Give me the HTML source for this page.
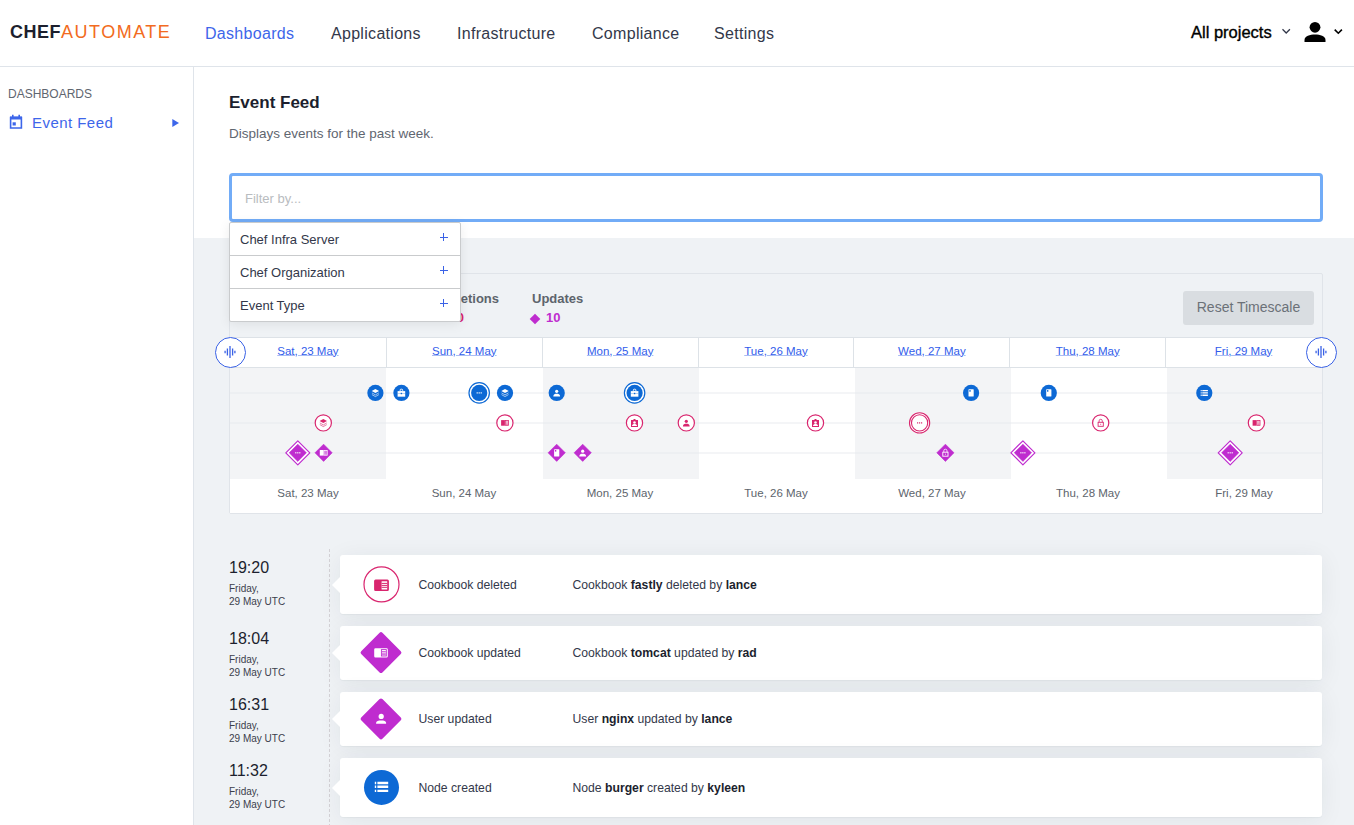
<!DOCTYPE html>
<html><head><meta charset="utf-8">
<style>
*{box-sizing:border-box;margin:0;padding:0}
html,body{width:1354px;height:825px;overflow:hidden;background:#fff;font-family:"Liberation Sans",sans-serif;color:#1c1f2e}
.a{position:absolute;white-space:nowrap}
#hdr{position:absolute;left:0;top:0;width:1354px;height:67px;background:#fff;border-bottom:1px solid #dfe4ea}
.logo{position:absolute;left:10px;top:22px;font-size:18px;line-height:20px;white-space:nowrap}
.logo b{color:#1c1f2e;font-weight:bold;letter-spacing:0.5px}
.logo span{color:#f26b21;letter-spacing:1.5px}
.nav{position:absolute;top:24.5px;font-size:16px;line-height:18px;color:#33384a;white-space:nowrap;letter-spacing:0.3px}
#side{position:absolute;left:0;top:67px;width:194px;height:758px;background:#fff;border-right:1px solid #dfe4ea}
#gray{position:absolute;left:194px;top:238px;width:1160px;height:587px;background:#eff2f5}
#filter{position:absolute;left:229px;top:173px;width:1094px;height:49px;border:3px solid #72acf7;border-radius:4px;background:#fff}
#dd{position:absolute;left:229px;top:222px;width:232px;height:100px;background:#fff;border:1px solid #c9cbcd;border-radius:2px;box-shadow:0 2px 12px rgba(0,0,0,0.08)}
.ddr{position:absolute;left:0;width:230px;height:33px;border-bottom:1px solid #c9cbcd}
.ddr span{position:absolute;left:10px;top:9px;font-size:13px;line-height:15px;color:#33384a}
.ddr i{position:absolute;left:209.5px;top:10px;width:8px;height:8px}
.ddr i:before{content:"";position:absolute;left:3.5px;top:0;width:1px;height:8px;background:#3a62e6}
.ddr i:after{content:"";position:absolute;left:0;top:3.5px;width:8px;height:1px;background:#3a62e6}
#card{position:absolute;left:229px;top:273px;width:1094px;height:241px;border:1px solid #e0e4e9;border-radius:2px;background:#eff2f5}
.cnt{position:absolute;top:17px;font-size:13px;font-weight:bold;color:#5d646c}
#reset{position:absolute;left:953px;top:17px;width:131px;height:34px;background:#d9dde1;border-radius:3px;font-size:14px;color:#6b7178;line-height:32px;text-align:center}
#dates{position:absolute;left:0;top:63px;width:1092px;height:31px;background:#fff;border-top:1px solid #dde2e7;border-bottom:1px solid #dde2e7}
.dt{position:absolute;top:0;width:155.86px;height:29px;border-left:1px solid #dde2e7;text-align:center}
.dt span{display:inline-block;margin-top:6px;font-size:11.5px;line-height:14px;color:#315ceb;text-decoration:underline;text-decoration-color:#a9bcf4;text-underline-offset:0px}
#plot{position:absolute;left:0;top:94px;width:1092px;height:111px;background:#fff}
.sh{position:absolute;top:0;height:111px;background:#f3f4f6}
.hl{position:absolute;left:0;width:1092px;height:2px;background:#e6e9ee;opacity:.45}
#bot{position:absolute;left:0;top:205px;width:1092px;height:34px;background:#fff}
.bl{position:absolute;top:7px;width:156px;text-align:center;font-size:11.5px;line-height:14px;color:#5d646c}
.hand{position:absolute;top:336.5px;margin-left:0.5px;width:31px;height:31px;border:1.5px solid #3a62e6;border-radius:50%;background:#fff}
.time{position:absolute;left:229px;font-size:16px;line-height:18px;color:#1c1f2e}
.day{position:absolute;left:229px;font-size:10px;line-height:13px;color:#3b404c}
.fc{position:absolute;left:340px;width:982px;background:#fff;border-radius:3px;box-shadow:0 1px 1px rgba(30,40,60,0.04),0 3px 24px rgba(30,40,60,0.065)}
.fc:before{content:"";position:absolute;left:-8px;top:50%;margin-top:-8px;width:0;height:0;border-top:8px solid transparent;border-bottom:8px solid transparent;border-right:8px solid #fff}
.fc .t1{position:absolute;left:78.5px;margin-top:1px;font-size:12.2px;color:#33384a}
.fc .t2{position:absolute;left:232.5px;margin-top:1px;font-size:12.2px;color:#33384a}
.fc .t2 b{color:#1c1f2e}
</style></head><body>
<div id="hdr">
  <div class="logo"><b>CHEF</b><span>AUTOMATE</span></div>
  <div class="nav" style="left:205px;color:#3d66ea">Dashboards</div>
  <div class="nav" style="left:331px">Applications</div>
  <div class="nav" style="left:457px">Infrastructure</div>
  <div class="nav" style="left:592px">Compliance</div>
  <div class="nav" style="left:714px">Settings</div>
  
<svg class="a" style="left:1270px;top:14px" width="84" height="36" viewBox="1270 14 84 36">
<path d="M1282.5,29.3 L1286.2,33 L1289.9,29.3" fill="none" stroke="#33384a" stroke-width="1.3"/>
<circle cx="1315" cy="27.3" r="5.4" fill="#000"/>
<path d="M1304.5,42 V40 C1304.5,36.2 1310,34.6 1315,34.6 C1320,34.6 1325.5,36.2 1325.5,40 V42Z" fill="#000"/>
<path d="M1334.7,29.6 L1338.3,33.2 L1341.9,29.6" fill="none" stroke="#000" stroke-width="1.6"/>
</svg>
  <div class="nav" style="left:1191px;color:#000;letter-spacing:0;font-size:16.5px;top:23px;-webkit-text-stroke:0.35px #000">All projects</div>
</div>
<div id="side"><svg class="a" style="left:0;top:0" width="194" height="80" viewBox="0 67 194 80">
<path d="M10.6,117.5 H21.4 V128 H10.6Z" fill="none" stroke="#3d66ea" stroke-width="1.6"/>
<path d="M10,116.5 H22 V119.5 H10Z" fill="#3d66ea"/>
<path d="M12.8,114.7 V117 M19.2,114.7 V117" stroke="#3d66ea" stroke-width="1.6"/>
<rect x="12.6" y="122.3" width="3.2" height="3.2" fill="#3d66ea"/>
<path d="M172.3,119.1 L179,123.1 L172.3,127.1Z" fill="#3d66ea"/>
</svg>
  <div class="a" style="left:8px;top:20px;font-size:12px;color:#5f6670">DASHBOARDS</div>
  <div class="a" style="left:32px;top:47px;font-size:15px;letter-spacing:0.45px;color:#3d66ea">Event Feed</div>
</div>
<div class="a" style="left:229px;top:93px;font-size:17px;font-weight:bold;color:#1c1f2e">Event Feed</div>
<div class="a" style="left:229px;top:126px;font-size:13.5px;color:#5f6670">Displays events for the past week.</div>
<div id="gray"></div>
<div id="filter"><span class="a" style="left:13px;top:15px;font-size:13px;color:#b9bcc0">Filter by...</span></div>

<div id="card">
  <div class="cnt" style="left:22px">Total Events</div>
  <div class="cnt" style="left:22px;top:36px;color:#1c1f2e">24</div>
  <div class="cnt" style="left:130px">Creations</div>
  <div class="cnt" style="left:130px;top:36px;color:#0d69d5">9</div>
  <div class="cnt" style="left:205px;width:64px;text-align:right">Deletions</div>
  <div class="cnt" style="left:210px;top:36px;width:24px;text-align:right;color:#d9256e">10</div>
  <div class="cnt" style="left:302px">Updates</div>
  <svg class="a" style="left:299px;top:38px" width="12" height="14" viewBox="-6 -7 12 14"><path d="M0,-5.3 L5.3,0 L0,5.3 L-5.3,0Z" fill="#bf2ccf"/></svg>
  <div class="cnt" style="left:316px;top:36px;color:#bf2ccf">10</div>
  <div id="reset">Reset Timescale</div>
  <div id="dates">
    <div class="dt" style="left:0;border-left:0"><span>Sat, 23 May</span></div>
    <div class="dt" style="left:155.86px"><span>Sun, 24 May</span></div>
    <div class="dt" style="left:311.72px"><span>Mon, 25 May</span></div>
    <div class="dt" style="left:467.58px"><span>Tue, 26 May</span></div>
    <div class="dt" style="left:623.44px"><span>Wed, 27 May</span></div>
    <div class="dt" style="left:779.30px"><span>Thu, 28 May</span></div>
    <div class="dt" style="left:935.16px"><span>Fri, 29 May</span></div>
  </div>
  <div id="plot">
    <div class="sh" style="left:0;width:156px"></div>
    <div class="sh" style="left:313px;width:156px"></div>
    <div class="sh" style="left:625px;width:156px"></div>
    <div class="sh" style="left:937px;width:155px"></div>
    <div class="hl" style="top:24px"></div>
    <div class="hl" style="top:54px"></div>
    <div class="hl" style="top:84px"></div>
  </div>
  <div id="bot">
    <div class="bl" style="left:0">Sat, 23 May</div>
    <div class="bl" style="left:156px">Sun, 24 May</div>
    <div class="bl" style="left:312px">Mon, 25 May</div>
    <div class="bl" style="left:468px">Tue, 26 May</div>
    <div class="bl" style="left:624px">Wed, 27 May</div>
    <div class="bl" style="left:780px">Thu, 28 May</div>
    <div class="bl" style="left:936px">Fri, 29 May</div>
  </div>
</div>
<svg class="a" style="left:0;top:0" width="1354" height="825" viewBox="0 0 1354 825"><g transform="translate(375.4,392.9)"><circle r="8.1" fill="#0d69d5"/><path d="M0,-4 L3.7,-1.9 L0,0.2 L-3.7,-1.9Z" fill="#fff"/><path d="M-3.5,0 L0,2 L3.5,0 M-3.5,1.7 L0,3.7 L3.5,1.7" stroke="#fff" stroke-width="0.7" fill="none" opacity="0.85"/></g><g transform="translate(401.4,392.9)"><circle r="8.1" fill="#0d69d5"/><rect x="-1.3" y="-3.7" width="2.6" height="2.2" rx="0.9" fill="none" stroke="#fff" stroke-width="0.9"/><path d="M-3.8,-1.8 H3.8 V3.8 H-3.8Z" fill="#fff"/><path d="M-3.8,0.6 H3.8" stroke="#0d69d5" stroke-width="0.5" opacity="0.6"/><rect x="-0.7" y="-0.1" width="1.4" height="1.4" fill="#0d69d5"/></g><g transform="translate(479.2,392.9)"><circle r="10.2" fill="#fff" stroke="#0d69d5" stroke-width="1.2"/><circle r="8.1" fill="#0d69d5"/><rect x="-2.6" y="-0.6" width="1.2" height="1.2" fill="#fff"/><rect x="-0.6" y="-0.6" width="1.2" height="1.2" fill="#fff"/><rect x="1.4" y="-0.6" width="1.2" height="1.2" fill="#fff"/></g><g transform="translate(505,392.9)"><circle r="8.1" fill="#0d69d5"/><path d="M0,-4 L3.7,-1.9 L0,0.2 L-3.7,-1.9Z" fill="#fff"/><path d="M-3.5,0 L0,2 L3.5,0 M-3.5,1.7 L0,3.7 L3.5,1.7" stroke="#fff" stroke-width="0.7" fill="none" opacity="0.85"/></g><g transform="translate(556.7,392.9)"><circle r="8.1" fill="#0d69d5"/><circle cx="0" cy="-1.6" r="1.6" fill="#fff"/><path d="M-3.4,3.6 C-3.4,1.2 -1.6,0.9 0,0.9 C1.6,0.9 3.4,1.2 3.4,3.6Z" fill="#fff"/></g><g transform="translate(634.6,392.9)"><circle r="10.2" fill="#fff" stroke="#0d69d5" stroke-width="1.2"/><circle r="8.1" fill="#0d69d5"/><rect x="-1.3" y="-3.7" width="2.6" height="2.2" rx="0.9" fill="none" stroke="#fff" stroke-width="0.9"/><path d="M-3.8,-1.8 H3.8 V3.8 H-3.8Z" fill="#fff"/><path d="M-3.8,0.6 H3.8" stroke="#0d69d5" stroke-width="0.5" opacity="0.6"/><rect x="-0.7" y="-0.1" width="1.4" height="1.4" fill="#0d69d5"/></g><g transform="translate(971.1,392.9)"><circle r="8.1" fill="#0d69d5"/><rect x="-2.6" y="-3.6" width="5.2" height="7.2" rx="0.5" fill="#fff"/><rect x="-1.8" y="-2.8" width="1.4" height="1.6" fill="#0d69d5"/></g><g transform="translate(1048.8,392.9)"><circle r="8.1" fill="#0d69d5"/><rect x="-2.6" y="-3.6" width="5.2" height="7.2" rx="0.5" fill="#fff"/><rect x="-1.8" y="-2.8" width="1.4" height="1.6" fill="#0d69d5"/></g><g transform="translate(1204.3,392.9)"><circle r="8.1" fill="#0d69d5"/><path d="M-3.6,-3 H-2.6 V-1.7 H-3.6Z M-2,-3 H3.6 V-1.7 H-2Z M-3.6,-0.65 H-2.6 V0.65 H-3.6Z M-2,-0.65 H3.6 V0.65 H-2Z M-3.6,1.7 H-2.6 V3 H-3.6Z M-2,1.7 H3.6 V3 H-2Z" fill="#fff"/></g><g transform="translate(323.3,422.9)"><circle r="8.1" fill="#fff" stroke="#d9256e" stroke-width="1.2"/><path d="M0,-4 L3.7,-1.9 L0,0.2 L-3.7,-1.9Z" fill="#d9256e"/><path d="M-3.5,0 L0,2 L3.5,0 M-3.5,1.7 L0,3.7 L3.5,1.7" stroke="#d9256e" stroke-width="0.7" fill="none" opacity="0.85"/></g><g transform="translate(504.9,422.9)"><circle r="8.1" fill="#fff" stroke="#d9256e" stroke-width="1.2"/><path d="M-3.8,-2.8 H0 V2.8 H-3.8Z" fill="#d9256e"/><rect x="0.4" y="-2.4" width="3.2" height="4.8" fill="none" stroke="#d9256e" stroke-width="0.8"/><path d="M1,-1 H3 M1,0.3 H3 M1,1.5 H3" stroke="#d9256e" stroke-width="0.6"/></g><g transform="translate(634.5,422.9)"><circle r="8.1" fill="#fff" stroke="#d9256e" stroke-width="1.2"/><path d="M-3.5,-3 H-1 V-4 H1 V-3 H3.5 V4 H-3.5Z" fill="#d9256e"/><circle cx="0" cy="-0.4" r="1.3" fill="#fff"/><path d="M-2.5,3 C-2.5,1.6 -1.2,1.2 0,1.2 C1.2,1.2 2.5,1.6 2.5,3Z" fill="#fff"/></g><g transform="translate(686.3,422.9)"><circle r="8.1" fill="#fff" stroke="#d9256e" stroke-width="1.2"/><circle cx="0" cy="-1.6" r="1.6" fill="#d9256e"/><path d="M-3.4,3.6 C-3.4,1.2 -1.6,0.9 0,0.9 C1.6,0.9 3.4,1.2 3.4,3.6Z" fill="#d9256e"/></g><g transform="translate(815.5,422.9)"><circle r="8.1" fill="#fff" stroke="#d9256e" stroke-width="1.2"/><path d="M-3.5,-3 H-1 V-4 H1 V-3 H3.5 V4 H-3.5Z" fill="#d9256e"/><circle cx="0" cy="-0.4" r="1.3" fill="#fff"/><path d="M-2.5,3 C-2.5,1.6 -1.2,1.2 0,1.2 C1.2,1.2 2.5,1.6 2.5,3Z" fill="#fff"/></g><g transform="translate(919.6,422.9)"><circle r="10.1" fill="#fff" stroke="#d9256e" stroke-width="1.1"/><circle r="8.1" fill="#fff" stroke="#d9256e" stroke-width="1.1"/><rect x="-2.6" y="-0.6" width="1.2" height="1.2" fill="#d9256e"/><rect x="-0.6" y="-0.6" width="1.2" height="1.2" fill="#d9256e"/><rect x="1.4" y="-0.6" width="1.2" height="1.2" fill="#d9256e"/></g><g transform="translate(1100.7,422.9)"><circle r="8.1" fill="#fff" stroke="#d9256e" stroke-width="1.2"/><path d="M-1.6,-0.8 V-2 A1.6,1.6 0 0 1 1.6,-2 V-0.8" fill="none" stroke="#d9256e" stroke-width="0.8"/><rect x="-2.6" y="-0.6" width="5.2" height="4" fill="none" stroke="#d9256e" stroke-width="0.9"/><rect x="-0.45" y="0.9" width="0.9" height="0.9" fill="#d9256e"/></g><g transform="translate(1256.4,422.9)"><circle r="8.1" fill="#fff" stroke="#d9256e" stroke-width="1.2"/><path d="M-3.8,-2.8 H0 V2.8 H-3.8Z" fill="#d9256e"/><rect x="0.4" y="-2.4" width="3.2" height="4.8" fill="none" stroke="#d9256e" stroke-width="0.8"/><path d="M1,-1 H3 M1,0.3 H3 M1,1.5 H3" stroke="#d9256e" stroke-width="0.6"/></g><g transform="translate(297.8,452.8)"><path d="M0,-12 L12,0 L0,12 L-12,0Z" fill="#fff" stroke="#bf2ccf" stroke-width="1.2" stroke-linejoin="round"/><path d="M0,-8.6 L8.6,0 L0,8.6 L-8.6,0Z" fill="#bf2ccf" stroke="#bf2ccf" stroke-width="0.6" stroke-linejoin="round"/><rect x="-2.6" y="-0.6" width="1.2" height="1.2" fill="#fff"/><rect x="-0.6" y="-0.6" width="1.2" height="1.2" fill="#fff"/><rect x="1.4" y="-0.6" width="1.2" height="1.2" fill="#fff"/></g><g transform="translate(323.6,452.8)"><path d="M0,-8.6 L8.6,0 L0,8.6 L-8.6,0Z" fill="#bf2ccf" stroke="#bf2ccf" stroke-width="0.6" stroke-linejoin="round"/><path d="M-3.8,-2.8 H0 V2.8 H-3.8Z" fill="#fff"/><rect x="0.4" y="-2.4" width="3.2" height="4.8" fill="none" stroke="#fff" stroke-width="0.8"/><path d="M1,-1 H3 M1,0.3 H3 M1,1.5 H3" stroke="#fff" stroke-width="0.6"/></g><g transform="translate(556.7,452.8)"><path d="M0,-8.6 L8.6,0 L0,8.6 L-8.6,0Z" fill="#bf2ccf" stroke="#bf2ccf" stroke-width="0.6" stroke-linejoin="round"/><rect x="-2.6" y="-3.6" width="5.2" height="7.2" rx="0.5" fill="#fff"/><rect x="-1.8" y="-2.8" width="1.4" height="1.6" fill="#bf2ccf"/></g><g transform="translate(582.7,452.8)"><path d="M0,-8.6 L8.6,0 L0,8.6 L-8.6,0Z" fill="#bf2ccf" stroke="#bf2ccf" stroke-width="0.6" stroke-linejoin="round"/><circle cx="0" cy="-1.6" r="1.6" fill="#fff"/><path d="M-3.4,3.6 C-3.4,1.2 -1.6,0.9 0,0.9 C1.6,0.9 3.4,1.2 3.4,3.6Z" fill="#fff"/></g><g transform="translate(945.4,452.8)"><path d="M0,-8.6 L8.6,0 L0,8.6 L-8.6,0Z" fill="#bf2ccf" stroke="#bf2ccf" stroke-width="0.6" stroke-linejoin="round"/><path d="M-1.6,-0.8 V-2 A1.6,1.6 0 0 1 1.6,-2 V-0.8" fill="none" stroke="#fff" stroke-width="0.8"/><rect x="-2.6" y="-0.6" width="5.2" height="4" fill="none" stroke="#fff" stroke-width="0.9"/><rect x="-0.45" y="0.9" width="0.9" height="0.9" fill="#fff"/></g><g transform="translate(1022.9,452.8)"><path d="M0,-12 L12,0 L0,12 L-12,0Z" fill="#fff" stroke="#bf2ccf" stroke-width="1.2" stroke-linejoin="round"/><path d="M0,-8.6 L8.6,0 L0,8.6 L-8.6,0Z" fill="#bf2ccf" stroke="#bf2ccf" stroke-width="0.6" stroke-linejoin="round"/><rect x="-2.6" y="-0.6" width="1.2" height="1.2" fill="#fff"/><rect x="-0.6" y="-0.6" width="1.2" height="1.2" fill="#fff"/><rect x="1.4" y="-0.6" width="1.2" height="1.2" fill="#fff"/></g><g transform="translate(1230.2,452.8)"><path d="M0,-12 L12,0 L0,12 L-12,0Z" fill="#fff" stroke="#bf2ccf" stroke-width="1.2" stroke-linejoin="round"/><path d="M0,-8.6 L8.6,0 L0,8.6 L-8.6,0Z" fill="#bf2ccf" stroke="#bf2ccf" stroke-width="0.6" stroke-linejoin="round"/><rect x="-2.6" y="-0.6" width="1.2" height="1.2" fill="#fff"/><rect x="-0.6" y="-0.6" width="1.2" height="1.2" fill="#fff"/><rect x="1.4" y="-0.6" width="1.2" height="1.2" fill="#fff"/></g></svg>
<div class="hand" style="left:214px"><svg width="28" height="28" viewBox="-14 -14 28 28" style="position:absolute;left:0;top:0"><path d="M-4.9,-1.3 V1.3 M-2.6,-3.4 V3.4 M0,-6 V6 M2.6,-3.4 V3.4 M4.9,-1.3 V1.3" stroke="#3a62e6" stroke-width="1.3"/></svg></div>
<div class="hand" style="left:1305px"><svg width="28" height="28" viewBox="-14 -14 28 28" style="position:absolute;left:0;top:0"><path d="M-4.9,-1.3 V1.3 M-2.6,-3.4 V3.4 M0,-6 V6 M2.6,-3.4 V3.4 M4.9,-1.3 V1.3" stroke="#3a62e6" stroke-width="1.3"/></svg></div>

<!-- feed -->
<div class="a" style="left:329px;top:549px;width:1px;height:276px;background:repeating-linear-gradient(to bottom,#d3d1d5 0,#d3d1d5 3px,transparent 3px,transparent 5px)"></div>
<div class="time" style="top:559px">19:20</div>
<div class="day" style="top:582px">Friday,<br>29 May UTC</div>
<div class="time" style="top:630px">18:04</div>
<div class="day" style="top:653px">Friday,<br>29 May UTC</div>
<div class="time" style="top:696px">16:31</div>
<div class="day" style="top:719px">Friday,<br>29 May UTC</div>
<div class="time" style="top:762px">11:32</div>
<div class="day" style="top:785px">Friday,<br>29 May UTC</div>

<div class="fc" style="top:555px;height:59px"><span class="t1" style="top:22px">Cookbook deleted</span><span class="t2" style="top:22px">Cookbook <b>fastly</b> deleted by <b>lance</b></span></div>
<div class="fc" style="top:626px;height:54px"><span class="t1" style="top:19.3px">Cookbook updated</span><span class="t2" style="top:19.3px">Cookbook <b>tomcat</b> updated by <b>rad</b></span></div>
<div class="fc" style="top:692px;height:54px"><span class="t1" style="top:19.3px">User updated</span><span class="t2" style="top:19.3px">User <b>nginx</b> updated by <b>lance</b></span></div>
<div class="fc" style="top:758px;height:59px"><span class="t1" style="top:22px">Node created</span><span class="t2" style="top:22px">Node <b>burger</b> created by <b>kyleen</b></span></div>

<svg class="a" style="left:0;top:0" width="1354" height="825" viewBox="0 0 1354 825">
<g transform="translate(381.5,584.4)"><circle r="17.5" fill="#fff" stroke="#d9256e" stroke-width="1.2"/>
<path d="M-5.9,-4.9 H5.9 A1.5,1.5 0 0 1 7.4,-3.4 V5.1 A1.5,1.5 0 0 1 5.9,6.6 H-5.9 A1.5,1.5 0 0 1 -7.4,5.1 V-3.4 A1.5,1.5 0 0 1 -5.9,-4.9Z" fill="#d9256e"/>
<rect x="0.1" y="-3.1" width="5.6" height="8.2" fill="#fff"/><path d="M0.1,-1 H5.7 M0.1,1 H5.7 M0.1,2.9 H5.7" stroke="#d9256e" stroke-width="1"/></g>
<g transform="translate(381,652.6)"><path d="M-1.4,-19.8 Q0,-21.2 1.4,-19.8 L19.8,-1.4 Q21.2,0 19.8,1.4 L1.4,19.8 Q0,21.2 -1.4,19.8 L-19.8,1.4 Q-21.2,0 -19.8,-1.4Z" fill="#bf2ccf"/>
<path d="M-5.6,-4.4 H5.6 A1.2,1.2 0 0 1 6.8,-3.2 V3.6 A1.2,1.2 0 0 1 5.6,4.8 H-5.6 A1.2,1.2 0 0 1 -6.8,3.6 V-3.2 A1.2,1.2 0 0 1 -5.6,-4.4Z" fill="#fff"/>
<rect x="0.4" y="-3.0" width="4.9" height="6.4" fill="none" stroke="#bf2ccf" stroke-width="0.9"/><path d="M1,-1 H4.8 M1,0.6 H4.8 M1,2.1 H4.8" stroke="#bf2ccf" stroke-width="0.8"/></g>
<g transform="translate(381,718.9)"><path d="M-1.4,-19.8 Q0,-21.2 1.4,-19.8 L19.8,-1.4 Q21.2,0 19.8,1.4 L1.4,19.8 Q0,21.2 -1.4,19.8 L-19.8,1.4 Q-21.2,0 -19.8,-1.4Z" fill="#bf2ccf"/>
<circle cx="0.2" cy="-2.5" r="2.6" fill="#fff"/><path d="M-4.9,4.9 V3.8 C-4.9,2 -2.5,1.5 0.2,1.5 C2.9,1.5 5.1,2 5.1,3.8 V4.9Z" fill="#fff"/></g>
<g transform="translate(381.5,787.4)"><circle r="17.5" fill="#0d69d5"/>
<path d="M-6.7,-5.6 H-5.3 V-3.2 H-6.7Z M-4.1,-5.6 H6.7 V-3.2 H-4.1Z M-6.7,-1.9 H-5.3 V0.5 H-6.7Z M-4.1,-1.9 H6.7 V0.5 H-4.1Z M-6.7,2.3 H-5.3 V4.7 H-6.7Z M-4.1,2.3 H6.7 V4.7 H-4.1Z" fill="#fff"/></g>
</svg>
<div id="dd">
  <div class="ddr" style="top:0"><span>Chef Infra Server</span><i></i></div>
  <div class="ddr" style="top:33px"><span>Chef Organization</span><i></i></div>
  <div class="ddr" style="top:66px;border-bottom:0"><span>Event Type</span><i></i></div>
</div>
</body></html>
